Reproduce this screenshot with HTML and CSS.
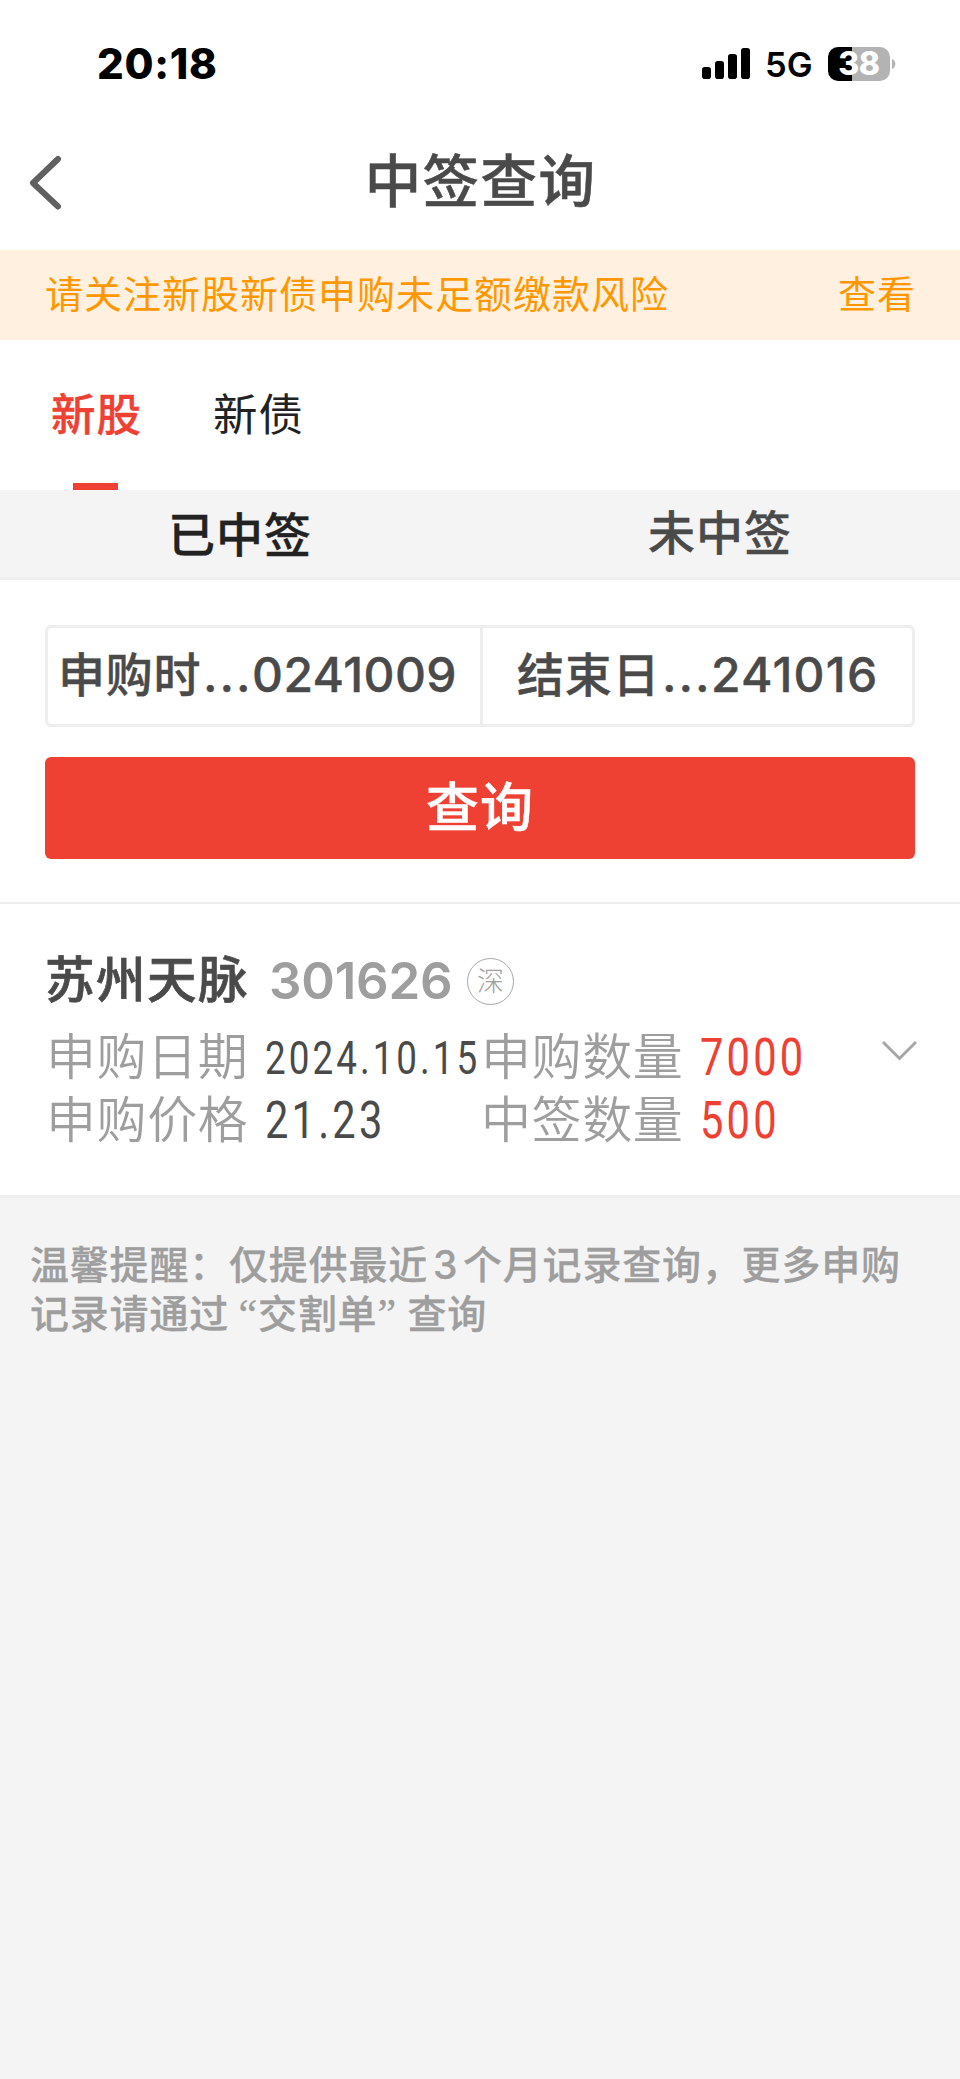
FILE: index.html
```html
<!DOCTYPE html>
<html lang="zh-CN">
<head>
<meta charset="utf-8">
<title>中签查询</title>
<link rel="stylesheet" href="styles.css">
</head>
<body>
<div class="status">
  <span class="time">20:18</span>
  <div class="status-right">
    <svg class="signal" width="48" height="31" viewBox="0 0 48 31">
      <rect x="0" y="19" width="9" height="12" rx="2.8"/>
      <rect x="13" y="13" width="9" height="18" rx="2.8"/>
      <rect x="26" y="6" width="9" height="25" rx="2.8"/>
      <rect x="39" y="0" width="9" height="31" rx="2.8"/>
    </svg>
    <span class="network">5G</span>
    <div class="battery"><span class="level">38</span></div>
    <svg class="nub" width="4" height="10" viewBox="0 0 4 10"><path d="M0 0C4.400 1.600 4.400 8.400 0 10z" fill="#b3b3b3"/></svg>
  </div>
</div>
<header class="header">
  <svg class="back" width="34" height="56" viewBox="0 0 34 56"><path d="M29 4 4 28 29 51.500" fill="none" stroke="#606060" stroke-width="6" stroke-linecap="round" stroke-linejoin="round"/></svg>
  <h1 class="title">中签查询</h1>
</header>
<div class="notice"><span>请关注新股新债申购未足额缴款风险</span><a class="notice-link">查看</a></div>
<nav class="tabs">
  <span class="tab tab-active">新股</span>
  <span class="tab">新债</span>
</nav>
<div class="segments">
  <span class="segment segment-active">已中签</span>
  <span class="segment">未中签</span>
</div>
<section class="form">
  <div class="dates">
    <div class="date date-start"><span class="date-label">申购时</span><span class="dots">...</span><span class="digits">0241009</span></div>
    <div class="date date-end"><span class="date-label">结束日</span><span class="dots">...</span><span class="digits digits-end">241016</span></div>
  </div>
  <button class="submit">查询</button>
</section>
<section class="record">
  <div class="stock"><span class="name">苏州天脉</span><span class="code">301626</span><span class="market">深</span></div>
  <div class="detail">
    <div class="rows">
      <span class="label">申购日期</span><span class="value"><b class="num num-date">2024.10.15</b></span>
      <span class="label">申购数量</span><span class="value red"><b class="num">7000</b></span>
      <span class="label">申购价格</span><span class="value"><b class="num">21.23</b></span>
      <span class="label">中签数量</span><span class="value red"><b class="num">500</b></span>
    </div>
    <svg class="more" width="36" height="24" viewBox="0 0 36 24"><path d="M2 2 18.500 18.500 35 2" fill="none" stroke="#a6a6a6" stroke-width="3"/></svg>
  </div>
</section>
<p class="tip">温馨提醒：仅提供最近<span class="three">3</span>个月记录查询，更多申购<br>记录请通过<span class="quote q-open">“</span>交割单<span class="quote q-close">”</span>查询</p>
</body>
</html>
```
FILE: styles.css
```css
* { box-sizing: border-box; }
body {
  margin: 0;
  width: 960px;
  min-height: 2079px;
  background: #f4f4f4;
  color: #4a4a4a;
  font-family: Inter, "Noto Sans CJK SC", sans-serif;
}
.status {
  display: flex;
  justify-content: space-between;
  height: 128px;
  padding: 0 64px 0 97px;
  background: #fff;
  color: #000;
}
.time { font-size: 42px; font-weight: 800; line-height: 128px; letter-spacing: .7px; }
.status-right { display: flex; align-items: center; height: 127px; }
.network { margin-left: 15px; width: 63px; font-size: 34.500px; font-weight: 600; line-height: 40px; padding-top: 2px; white-space: nowrap; }
.battery {
  width: 62px;
  height: 34px;
  border-radius: 10px;
  background: linear-gradient(to right, #000 24px, #b3b3b3 24px);
  text-align: center;
}
.level { color: #fff; font-size: 32px; font-weight: 800; line-height: 34px; letter-spacing: -.3px; }
.nub { margin-left: 2px; }
.header {
  display: flex;
  align-items: center;
  height: 122px;
  padding: 0 0 14px 29px;
  background: #fff;
}
.back { margin-top: 1px; }
.title { flex: 1; margin: 0 63px 0 1px; text-align: center; font-size: 56.500px; font-weight: 500; line-height: 80px; letter-spacing: 1.4px; -webkit-text-stroke: .5px; }
.notice {
  display: flex;
  justify-content: space-between;
  height: 90px;
  padding: 0 44px 0 45px;
  background: #fff0e0;
  color: #ff9800;
  font-size: 38px;
  line-height: 88px;
  letter-spacing: 1px;
}
.tabs { display: flex; gap: 71px; height: 150px; padding-left: 51px; background: #fff; color: #222; }
.tab { position: relative; font-size: 44.500px; line-height: 150px; letter-spacing: 1px; }
.tab-active { color: #ef4034; font-weight: 500; -webkit-text-stroke: .4px; }
.tab-active::after { content: ""; position: absolute; left: 22px; bottom: 0; width: 45px; height: 7px; background: #ef4034; }
.segments { display: flex; height: 90px; border-bottom: 3px solid #eee; }
.segment { flex: 1; text-align: center; font-size: 47px; font-weight: 500; line-height: 86px; letter-spacing: 1px; -webkit-text-stroke: .4px; }
.segment-active { color: #222; padding-top: 2px; }
.form { height: 324px; padding: 45px 45px 0; background: #fff; border-bottom: 2px solid #eee; }
.dates { display: flex; height: 102px; border: 3px solid #eee; border-radius: 6px; }
.date { display: flex; font-size: 48px; font-weight: 500; line-height: 94px; white-space: nowrap; -webkit-text-stroke: .4px; }
.date-start { width: 435px; padding-left: 10px; border-right: 3px solid #eee; }
.date-end { padding-left: 34px; }
.date-label { font-size: 47px; width: 145px; letter-spacing: .8px; }
.dots { width: 49px; letter-spacing: 2px; }
.digits { letter-spacing: .4px; }
.digits-end { letter-spacing: 1.2px; }
.submit {
  display: block;
  width: 870px;
  height: 102px;
  margin-top: 30px;
  padding: 0;
  border: 0;
  border-radius: 6px;
  background: #ef4034;
  color: #fff;
  font: 500 53px/98px Inter, "Noto Sans CJK SC", sans-serif;
  letter-spacing: 1px;
  -webkit-text-stroke: .5px;
}
.record { height: 294px; padding: 43px 43px 0 45px; background: #fff; border-bottom: 3px solid #eee; }
.stock { display: flex; align-items: center; height: 68px; line-height: 68px; }
.name { width: 224px; font-size: 49.500px; font-weight: 500; line-height: 66px; margin-top: -2px; letter-spacing: 1.500px; -webkit-text-stroke: .7px; }
.code { width: 198px; margin-top: -1px; color: #9e9e9e; font-size: 51px; font-weight: 600; letter-spacing: -.2px; }
.market {
  width: 47px;
  height: 47px;
  border: 1px solid #a8a8a8;
  border-radius: 50%;
  color: #a0a0a0;
  font-size: 27px;
  font-weight: 300;
  line-height: 45px;
  text-align: center;
}
.detail { display: flex; justify-content: space-between; height: 126px; }
.rows { display: grid; grid-template-columns: 219px 217px 218px 150px; grid-auto-rows: 63px; padding-left: 1px; }
.label { font-size: 50px; font-weight: 350; line-height: 85px; color: #9e9e9e; letter-spacing: .6px; }
.label:nth-child(4n+3) { margin-left: -1px; }
.value { line-height: 86px; white-space: nowrap; font-family: Roboto, sans-serif; }
.red { color: #ef4034; }
.num { display: inline-block; font-size: 52px; font-weight: 400; transform: scaleX(.8); transform-origin: 0 50%; letter-spacing: 4px; }
.num-date { font-size: 46px; letter-spacing: 3.800px; }
.more { margin-top: 25px; margin-right: 0; flex: none; }
.tip { margin: 42px 0 0 30px; color: #9e9e9e; font-size: 39px; font-weight: 500; line-height: 49px; letter-spacing: .8px; white-space: nowrap; -webkit-text-stroke: .3px; }
.three { display: inline-block; width: 35px; text-align: center; }
.quote { display: inline-block; font-family: "Liberation Serif", serif; font-size: 42px; }
.q-open { width: 29px; text-align: right; }
.q-close { width: 30px; }
```
